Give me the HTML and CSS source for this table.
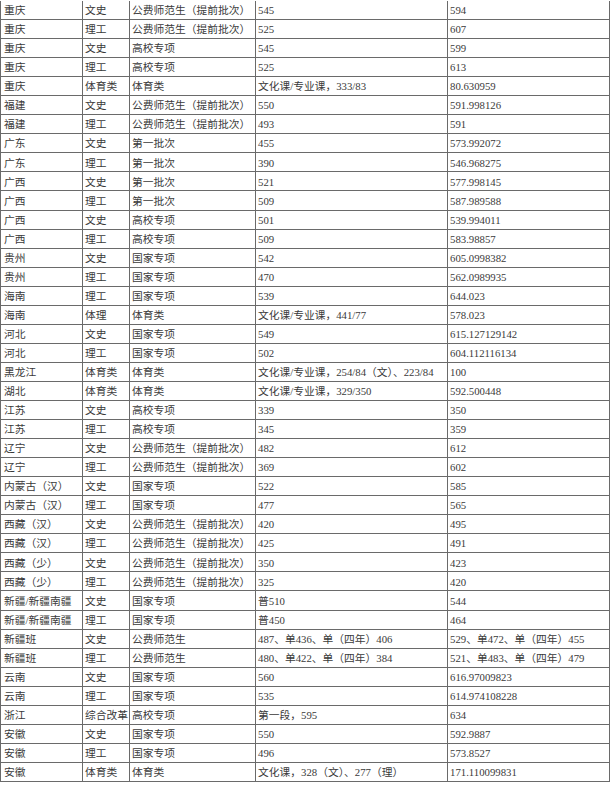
FILE: index.html
```html
<!DOCTYPE html>
<html lang="zh-CN">
<head>
<meta charset="utf-8">
<title>录取分数</title>
<link rel="stylesheet" href="styles.css">
</head>
<body>
<div class="sheet">
  <div class="c">重庆</div><div class="c">文史</div><div class="c">公费师范生（提前批次）</div><div class="c">545</div><div class="c">594</div>
  <div class="c">重庆</div><div class="c">理工</div><div class="c">公费师范生（提前批次）</div><div class="c">525</div><div class="c">607</div>
  <div class="c">重庆</div><div class="c">文史</div><div class="c">高校专项</div><div class="c">545</div><div class="c">599</div>
  <div class="c">重庆</div><div class="c">理工</div><div class="c">高校专项</div><div class="c">525</div><div class="c">613</div>
  <div class="c">重庆</div><div class="c">体育类</div><div class="c">体育类</div><div class="c">文化课/专业课，333/83</div><div class="c">80.630959</div>
  <div class="c">福建</div><div class="c">文史</div><div class="c">公费师范生（提前批次）</div><div class="c">550</div><div class="c">591.998126</div>
  <div class="c">福建</div><div class="c">理工</div><div class="c">公费师范生（提前批次）</div><div class="c">493</div><div class="c">591</div>
  <div class="c">广东</div><div class="c">文史</div><div class="c">第一批次</div><div class="c">455</div><div class="c">573.992072</div>
  <div class="c">广东</div><div class="c">理工</div><div class="c">第一批次</div><div class="c">390</div><div class="c">546.968275</div>
  <div class="c">广西</div><div class="c">文史</div><div class="c">第一批次</div><div class="c">521</div><div class="c">577.998145</div>
  <div class="c">广西</div><div class="c">理工</div><div class="c">第一批次</div><div class="c">509</div><div class="c">587.989588</div>
  <div class="c">广西</div><div class="c">文史</div><div class="c">高校专项</div><div class="c">501</div><div class="c">539.994011</div>
  <div class="c">广西</div><div class="c">理工</div><div class="c">高校专项</div><div class="c">509</div><div class="c">583.98857</div>
  <div class="c">贵州</div><div class="c">文史</div><div class="c">国家专项</div><div class="c">542</div><div class="c">605.0998382</div>
  <div class="c">贵州</div><div class="c">理工</div><div class="c">国家专项</div><div class="c">470</div><div class="c">562.0989935</div>
  <div class="c">海南</div><div class="c">理工</div><div class="c">国家专项</div><div class="c">539</div><div class="c">644.023</div>
  <div class="c">海南</div><div class="c">体理</div><div class="c">体育类</div><div class="c">文化课/专业课，441/77</div><div class="c">578.023</div>
  <div class="c">河北</div><div class="c">文史</div><div class="c">国家专项</div><div class="c">549</div><div class="c">615.127129142</div>
  <div class="c">河北</div><div class="c">理工</div><div class="c">国家专项</div><div class="c">502</div><div class="c">604.112116134</div>
  <div class="c">黑龙江</div><div class="c">体育类</div><div class="c">体育类</div><div class="c">文化课/专业课，254/84（文）、223/84</div><div class="c">100</div>
  <div class="c">湖北</div><div class="c">体育类</div><div class="c">体育类</div><div class="c">文化课/专业课，329/350</div><div class="c">592.500448</div>
  <div class="c">江苏</div><div class="c">文史</div><div class="c">高校专项</div><div class="c">339</div><div class="c">350</div>
  <div class="c">江苏</div><div class="c">理工</div><div class="c">高校专项</div><div class="c">345</div><div class="c">359</div>
  <div class="c">辽宁</div><div class="c">文史</div><div class="c">公费师范生（提前批次）</div><div class="c">482</div><div class="c">612</div>
  <div class="c">辽宁</div><div class="c">理工</div><div class="c">公费师范生（提前批次）</div><div class="c">369</div><div class="c">602</div>
  <div class="c">内蒙古（汉）</div><div class="c">文史</div><div class="c">国家专项</div><div class="c">522</div><div class="c">585</div>
  <div class="c">内蒙古（汉）</div><div class="c">理工</div><div class="c">国家专项</div><div class="c">477</div><div class="c">565</div>
  <div class="c">西藏（汉）</div><div class="c">文史</div><div class="c">公费师范生（提前批次）</div><div class="c">420</div><div class="c">495</div>
  <div class="c">西藏（汉）</div><div class="c">理工</div><div class="c">公费师范生（提前批次）</div><div class="c">425</div><div class="c">491</div>
  <div class="c">西藏（少）</div><div class="c">文史</div><div class="c">公费师范生（提前批次）</div><div class="c">350</div><div class="c">423</div>
  <div class="c">西藏（少）</div><div class="c">理工</div><div class="c">公费师范生（提前批次）</div><div class="c">325</div><div class="c">420</div>
  <div class="c">新疆/新疆南疆</div><div class="c">文史</div><div class="c">国家专项</div><div class="c">普510</div><div class="c">544</div>
  <div class="c">新疆/新疆南疆</div><div class="c">理工</div><div class="c">国家专项</div><div class="c">普450</div><div class="c">464</div>
  <div class="c">新疆班</div><div class="c">文史</div><div class="c">公费师范生</div><div class="c">487、单436、单（四年）406</div><div class="c">529、单472、单（四年）455</div>
  <div class="c">新疆班</div><div class="c">理工</div><div class="c">公费师范生</div><div class="c">480、单422、单（四年）384</div><div class="c">521、单483、单（四年）479</div>
  <div class="c">云南</div><div class="c">文史</div><div class="c">国家专项</div><div class="c">560</div><div class="c">616.97009823</div>
  <div class="c">云南</div><div class="c">理工</div><div class="c">国家专项</div><div class="c">535</div><div class="c">614.974108228</div>
  <div class="c">浙江</div><div class="c">综合改革</div><div class="c">高校专项</div><div class="c">第一段，595</div><div class="c">634</div>
  <div class="c">安徽</div><div class="c">文史</div><div class="c">国家专项</div><div class="c">550</div><div class="c">592.9887</div>
  <div class="c">安徽</div><div class="c">理工</div><div class="c">国家专项</div><div class="c">496</div><div class="c">573.8527</div>
  <div class="c">安徽</div><div class="c">体育类</div><div class="c">体育类</div><div class="c">文化课，328（文）、277（理）</div><div class="c">171.110099831</div>
</div>
</body>
</html>
```
FILE: styles.css
```css
html, body {
  margin: 0;
  padding: 0;
  background: #ffffff;
}

.sheet {
  margin-top: 1px;
  display: grid;
  grid-template-columns: 82px 47px 126px 192px 162px;
  grid-auto-rows: 19.05px;
  width: 609px;
  border-left: 1px solid #6a6a6a;
  font-family: "Liberation Serif", "Noto Sans CJK SC", serif;
  font-size: 10.75px;
  color: #3a3a3a;
}

.c {
  box-sizing: border-box;
  display: flex;
  align-items: center;
  padding-left: 2px;
  padding-top: 1px;
  border-right: 1px solid #6a6a6a;
  border-bottom: 1px solid #6a6a6a;
  white-space: nowrap;
  line-height: 1;
}

.c:nth-child(5n+1) {
  padding-left: 3px;
}
```
